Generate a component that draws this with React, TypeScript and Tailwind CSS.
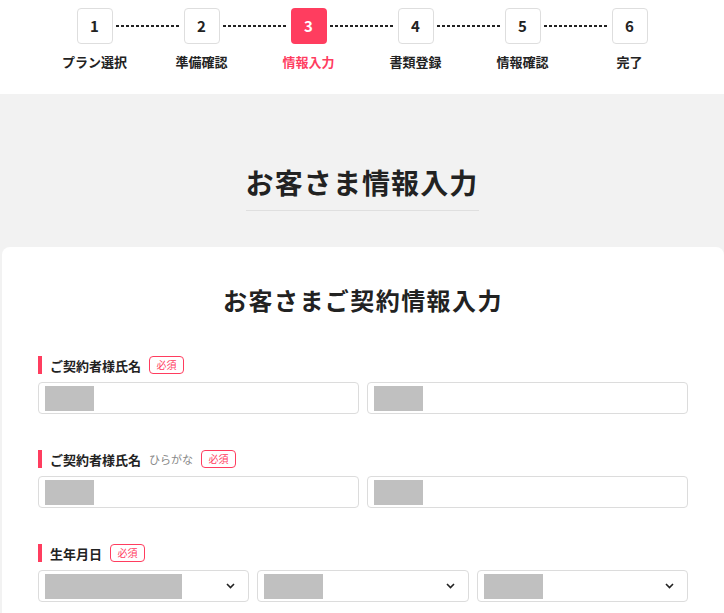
import React from "react";

const steps = ["プラン選択", "準備確認", "情報入力", "書類登録", "情報確認", "完了"];

function Badge() {
  return (
    <span className="ml-[8px] inline-flex h-[18px] w-[35px] items-center justify-center rounded-[4px] border border-[#ff3d5f] text-[10px] leading-none text-[#ff3d5f]">
      必須
    </span>
  );
}

function Label({ text, sub }: { text: string; sub?: string }) {
  return (
    <div className="flex h-[18px] items-center">
      <span className="h-[18px] w-[4px] bg-[#ff3d5f]" />
      <span className="ml-[8px] text-[13px] font-bold leading-none text-[#222]">{text}</span>
      {sub && <span className="ml-[8px] text-[11px] leading-none text-[#888]">{sub}</span>}
      <Badge />
    </div>
  );
}

function Input() {
  return (
    <div className="flex h-[32px] flex-1 items-center rounded-[4px] border border-[#dcdcdc] bg-white pl-[6px]">
      <div className="h-[25px] w-[49px] bg-[#c0c0c0]" />
    </div>
  );
}

function Select({ w }: { w: number }) {
  return (
    <div className="flex h-[32px] flex-1 items-center justify-between rounded-[4px] border border-[#dcdcdc] bg-white pl-[6px] pr-[13px]">
      <div className="h-[25px] bg-[#c0c0c0]" style={{ width: w }} />
      <svg width="9" height="6" viewBox="0 0 9 6" fill="none">
        <path d="M1 1l3.5 3.5L8 1" stroke="#222" strokeWidth="1.6" />
      </svg>
    </div>
  );
}

export default function App() {
  return (
    <div className="min-h-[613px] bg-[#f2f2f2] font-['Noto_Sans_CJK_JP',sans-serif] text-[#222]">
      <div className="h-[94px] bg-white pt-[8px]">
        <div className="flex items-center justify-center">
          {steps.map((_, i) => (
            <React.Fragment key={i}>
              <div
                className={
                  i === 2
                    ? "flex h-[36px] w-[36px] items-center justify-center rounded-[4px] bg-[#ff3d5f] text-[15px] font-bold text-white"
                    : "flex h-[36px] w-[36px] items-center justify-center rounded-[4px] border border-[#dedede] bg-white text-[15px] font-bold text-[#222]"
                }
              >
                {i + 1}
              </div>
              {i < 5 && (
                <div className="mx-[3px] h-[2px] w-[65px] bg-[repeating-linear-gradient(to_right,#222_0_3px,transparent_3px_5px)]" />
              )}
            </React.Fragment>
          ))}
        </div>
        <div className="mt-[9px] flex justify-center">
          {steps.map((s, i) => (
            <div
              key={s}
              className={
                i === 2
                  ? "w-[107px] text-center text-[13px] font-bold leading-[18px] text-[#ff3d5f]"
                  : "w-[107px] text-center text-[13px] font-bold leading-[18px] text-[#222]"
              }
            >
              {s}
            </div>
          ))}
        </div>
      </div>

      <div className="flex justify-center pt-[67px]">
        <h1 className="w-[233px] border-b border-[#dfdfdf] pb-[7px] text-center text-[28px] font-bold leading-[42px] tracking-[0.04em]">
          お客さま情報入力
        </h1>
      </div>

      <div className="ml-[2px] mt-[36px] rounded-t-[8px] bg-white px-[36px] pb-[20px] pt-[35px]">
        <h2 className="text-center text-[24px] font-bold leading-[36px] tracking-[0.06em]">
          お客さまご契約情報入力
        </h2>

        <div className="mt-[38px]">
          <Label text="ご契約者様氏名" />
          <div className="mt-[8px] flex gap-[8px]">
            <Input />
            <Input />
          </div>
        </div>

        <div className="mt-[36px]">
          <Label text="ご契約者様氏名" sub="ひらがな" />
          <div className="mt-[8px] flex gap-[8px]">
            <Input />
            <Input />
          </div>
        </div>

        <div className="mt-[36px]">
          <Label text="生年月日" />
          <div className="mt-[8px] flex gap-[8px]">
            <Select w={137} />
            <Select w={59} />
            <Select w={59} />
          </div>
        </div>
      </div>
    </div>
  );
}
